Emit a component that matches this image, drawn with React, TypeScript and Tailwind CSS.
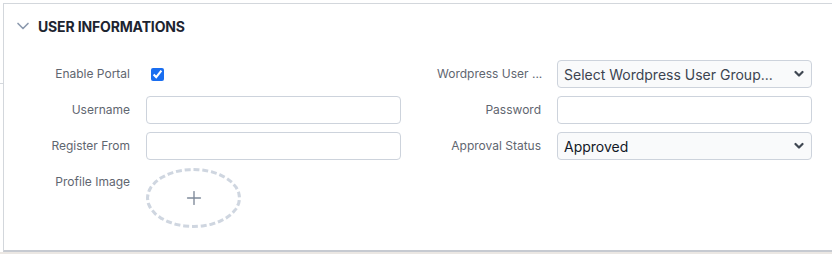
import { ChevronDown, Plus } from 'lucide-react';

const labelCls = 'w-[104px] shrink-0 whitespace-nowrap text-right text-[12px] text-[#5f6670]';
const inputCls = 'h-[28px] flex-1 min-w-0 rounded-[4px] border border-[#cdd3dc] bg-white px-[7px] text-[14px] text-[#1f2530] outline-none';

const SelectBox = ({ value, muted }: { value: string; muted?: boolean }) => (
  <div className="relative flex-1 min-w-0">
    <select
      defaultValue={value}
      className={`h-[28px] w-full appearance-none rounded-[4px] border border-[#cdd3dc] bg-[#f9fafb] pl-[6px] pr-[28px] text-[14px] outline-none ${
        muted ? 'text-[#3c4450]' : 'text-[#111827]'
      }`}
    >
      <option>{value}</option>
    </select>
    <svg
      className="pointer-events-none absolute right-[8px] top-[10px]"
      width="10"
      height="8"
      viewBox="0 0 10 8"
    >
      <path d="M1.5 2 L5 5.5 L8.5 2" fill="none" stroke="#3f4752" strokeWidth="2.2" strokeLinecap="round" strokeLinejoin="round" />
    </svg>
  </div>
);

export default function App() {
  return (
    <div className="flex h-[254px] w-[832px] flex-col bg-white font-['Inter','Liberation_Sans',sans-serif]">
      <div className="h-[3px] shrink-0" />
      <div className="flex flex-1 min-h-0">
        <div className="w-[3px] shrink-0 pt-[80px]">
          <div className="h-px bg-[#d4d8dd]" />
        </div>
        <div className="flex flex-1 flex-col border-l border-t border-b-2 border-[#d3d7dc] border-b-[#c6cad1]">
          <div className="flex h-[44px] shrink-0 items-center gap-[5px] pl-[9px]">
            <ChevronDown size={20} strokeWidth={2} className="text-[#8c9aae]" />
            <h2 className="text-[14px] font-bold tracking-[-0.15px] text-[#1d2430]">USER INFORMATIONS</h2>
          </div>

          <div className="grid grid-cols-2 gap-x-[36px] gap-y-[8px] pl-[22px] pr-[20px] pt-[12px]">
            <div className="flex items-center gap-[16px]">
              <span className={labelCls}>Enable Portal</span>
              <div className="flex h-[28px] items-center">
                <input type="checkbox" defaultChecked className="ml-[5px] h-[13px] w-[13px] accent-[#1a6ef0]" />
              </div>
            </div>
            <div className="flex items-center gap-[16px]">
              <span className={labelCls}>Wordpress User ...</span>
              <SelectBox value="Select Wordpress User Group..." muted />
            </div>

            <div className="flex items-center gap-[16px]">
              <span className={labelCls}>Username</span>
              <input className={inputCls} />
            </div>
            <div className="flex items-center gap-[16px]">
              <span className={labelCls}>Password</span>
              <input type="password" className={inputCls} />
            </div>

            <div className="flex items-center gap-[16px]">
              <span className={labelCls}>Register From</span>
              <input className={inputCls} />
            </div>
            <div className="flex items-center gap-[16px]">
              <span className={labelCls}>Approval Status</span>
              <SelectBox value="Approved" />
            </div>

            <div className="flex items-start gap-[16px]">
              <span className={`${labelCls} leading-[28px]`}>Profile Image</span>
              <button className="flex h-[60px] w-[95px] items-center justify-center rounded-[50%] border-[3px] border-dashed border-[#cfd6e0]">
                <Plus size={22} strokeWidth={1.5} className="text-[#7f8a9a]" />
              </button>
            </div>
          </div>
        </div>
      </div>
      <div className="h-[2px] shrink-0 bg-[#ebe7e3]" />
    </div>
  );
}
